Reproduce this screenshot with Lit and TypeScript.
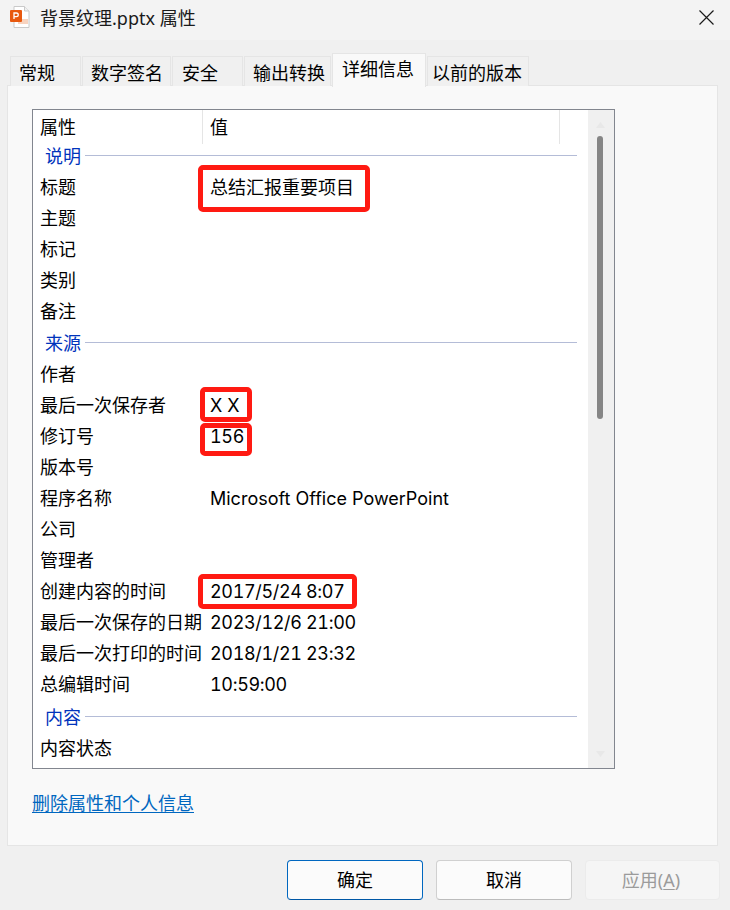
import { LitElement, html, css, svg } from "lit";
import { customElement } from "lit/decorators.js";

type Item = { k: string; v?: string } | { group: string; gap?: number };

const ITEMS: Item[] = [
  { group: "说明" },
  { k: "标题", v: "总结汇报重要项目" },
  { k: "主题" },
  { k: "标记" },
  { k: "类别" },
  { k: "备注" },
  { group: "来源", gap: 1 },
  { k: "作者" },
  { k: "最后一次保存者", v: "X X" },
  { k: "修订号", v: "156" },
  { k: "版本号" },
  { k: "程序名称", v: "Microsoft Office PowerPoint" },
  { k: "公司" },
  { k: "管理者" },
  { k: "创建内容的时间", v: "2017/5/24 8:07" },
  { k: "最后一次保存的日期", v: "2023/12/6 21:00" },
  { k: "最后一次打印的时间", v: "2018/1/21 23:32" },
  { k: "总编辑时间", v: "10:59:00" },
  { group: "内容", gap: 2 },
  { k: "内容状态" },
];

const TABS = [
  { t: "常规", w: 71, p: 8 },
  { t: "数字签名", w: 89, p: 8 },
  { t: "安全", w: 71, p: 9 },
  { t: "输出转换", w: 87, p: 8 },
  { t: "详细信息", w: 94, p: 9 },
  { t: "以前的版本", w: 102, p: 4 },
];

// Annotation boxes: [left, top, width, height] relative to the list box.
const MARKS = [
  [165, 55, 172, 47],
  [167, 277, 52, 35],
  [167, 313, 52, 33],
  [165, 464, 159, 35],
];

@customElement("app-root")
export class AppRoot extends LitElement {
  static styles = css`
    :host {
      display: block;
      width: 730px;
      height: 910px;
      overflow: hidden;
      background: #f0f0f0;
      color: #000;
      font-family: "Noto Sans", "Noto Sans CJK SC", sans-serif;
      font-size: 18px;
      line-height: 24px;
    }
    .title {
      height: 40px;
      background: #f3f3f3;
      display: flex;
      align-items: center;
      padding-left: 10px;
      box-sizing: border-box;
      color: #1a1a1a;
    }
    .title .app { width: 20px; height: 22px; flex: none; margin-right: 10px; margin-top: -6px; }
    .title .name { flex: 1; margin-top: -4px; }
    .title .close { width: 15px; height: 15px; flex: none; margin-right: 16px; margin-top: -5px; }
    .tabs {
      display: flex;
      align-items: flex-end;
      height: 46px;
      padding: 0 0 0 10px;
      gap: 1px;
      position: relative;
      z-index: 1;
      box-sizing: border-box;
    }
    .tab {
      box-sizing: border-box;
      height: 30px;
      background: #f0f0f0;
      border: 1px solid #e5e5e5;
      border-bottom: none;
      white-space: nowrap;
      line-height: 32px;
      overflow: hidden;
    }
    .tab.on {
      height: 34px;
      background: #f9f9f9;
      line-height: 30px;
      margin-bottom: -1px;
      border-radius: 1px 1px 0 0;
    }
    .panel {
      box-sizing: border-box;
      margin: -1px 12px 0 7px;
      height: 761px;
      background: #f9f9f9;
      border: 1px solid #e5e5e5;
      padding: 23px 0 0 24px;
    }
    .list {
      box-sizing: border-box;
      position: relative;
      width: 583px;
      height: 660px;
      background: #fff;
      border: 1px solid #82868f;
      overflow: hidden;
    }
    .head {
      display: grid;
      grid-template-columns: 170px 357px;
      height: 30px;
    }
    .head div {
      border-right: 1px solid #e5e5e5;
      padding-left: 7px;
      line-height: 34px;
    }
    .row {
      display: grid;
      grid-template-columns: 170px 1fr;
      height: 31px;
      line-height: 33px;
      padding-left: 7px;
      white-space: nowrap;
    }
    .val {
      font-family: "Inter", "Noto Sans CJK SC", sans-serif;
    }
    .val.num {
      font-variant-numeric: tabular-nums;
      letter-spacing: -0.35px;
    }
    .group {
      display: flex;
      align-items: center;
      gap: 4px;
      height: 31px;
      padding-left: 12px;
      margin-right: 37px;
      color: #0033bc;
    }
    .group::after {
      content: "";
      flex: 1;
      height: 1px;
      background: #b4bcd7;
    }
    .gap1 { margin-top: 1px; }
    .gap2 { margin-top: 2px; }
    .bar {
      position: absolute;
      top: 0;
      bottom: 0;
      right: 0;
      width: 26px;
      background: #f0f0f0;
    }
    .thumb {
      position: absolute;
      left: 9px;
      top: 26px;
      width: 6px;
      height: 283px;
      border-radius: 3px;
      background: #858585;
    }
    .arrow { position: absolute; left: 8px; width: 9px; height: 6px; fill: #e8e8e8; }
    .arrow.up { top: 12px; }
    .arrow.down { bottom: 11px; }
    .mark {
      position: absolute;
      box-sizing: border-box;
      border: 5px solid #ff1a12;
      border-radius: 5px;
    }
    .link {
      display: inline-block;
      margin-top: 22px;
      color: #0067c0;
      text-decoration: underline;
      text-underline-offset: 2px;
    }
    .buttons {
      display: flex;
      gap: 13px;
      padding: 14px 10px 0 287px;
    }
    .btn {
      box-sizing: border-box;
      width: 136px;
      height: 40px;
      border: 1px solid #d0d0d0;
      border-bottom-color: #bcbcbc;
      border-radius: 4px;
      background: #fbfbfb;
      display: flex;
      align-items: center;
      justify-content: center;
    }
    .btn.ok { border-color: #0067c0; border-bottom-color: #0058a6; }
    .btn.off { width: 135px; background: #f5f5f5; border-color: #ebebeb; color: #9b9b9b; padding-right: 3px; }
    .btn u { text-underline-offset: 2px; }
  `;

  private row(it: Item) {
    if ("group" in it) {
      const cls = it.gap ? `group gap${it.gap}` : "group";
      return html`<div class=${cls}>${it.group}</div>`;
    }
    const v = it.v ?? "";
    const cls = /^\d/.test(v) ? "val num" : "val";
    return html`<div class="row"><span>${it.k}</span><span class=${cls}>${v}</span></div>`;
  }

  render() {
    return html`
      <div class="title">
        <svg class="app" viewBox="0 0 20 22">
          <path d="M4 .5h10.500L19 5v16.500H4z" fill="#fff" stroke="#c9c9c9"/>
          <path d="M14.500 .5V5H19" fill="#f0f0f0" stroke="#c9c9c9"/>
          <rect x="8" y="13" width="10" height="5" fill="#f7d3bf"/>
          <rect x="0" y="4" width="12" height="12" rx="1" fill="#e8590f"/>
          ${svg`<path d="M4 13V7h2.400a1.800 1.800 0 0 1 0 3.700H4" fill="none" stroke="#fff" stroke-width="1.300"/>`}
        </svg>
        <span class="name">背景纹理.pptx 属性</span>
        <svg class="close" viewBox="0 0 15 15">
          <path d="M.5 .5l14 14M14.500 .5l-14 14" stroke="#1a1a1a" stroke-width="1.200" fill="none"/>
        </svg>
      </div>
      <div class="tabs">
        ${TABS.map(
          (t, i) => html`<div
            class="tab ${i === 4 ? "on" : ""}"
            style="width:${t.w}px;padding-left:${t.p}px"
          >${t.t}</div>`
        )}
      </div>
      <div class="panel">
        <div class="list">
          <div class="head"><div>属性</div><div>值</div></div>
          ${ITEMS.map((it) => this.row(it))}
          <div class="bar">
            <svg class="arrow up" viewBox="0 0 9 6"><path d="M4.500 0L9 6H0z"/></svg>
            <div class="thumb"></div>
            <svg class="arrow down" viewBox="0 0 9 6"><path d="M0 0h9L4.500 6z"/></svg>
          </div>
          ${MARKS.map(
            ([l, t, w, h]) =>
              html`<div class="mark" style="left:${l}px;top:${t}px;width:${w}px;height:${h}px"></div>`
          )}
        </div>
        <span class="link">删除属性和个人信息</span>
      </div>
      <div class="buttons">
        <div class="btn ok">确定</div>
        <div class="btn">取消</div>
        <div class="btn off">应用(<u>A</u>)</div>
      </div>
    `;
  }
}
